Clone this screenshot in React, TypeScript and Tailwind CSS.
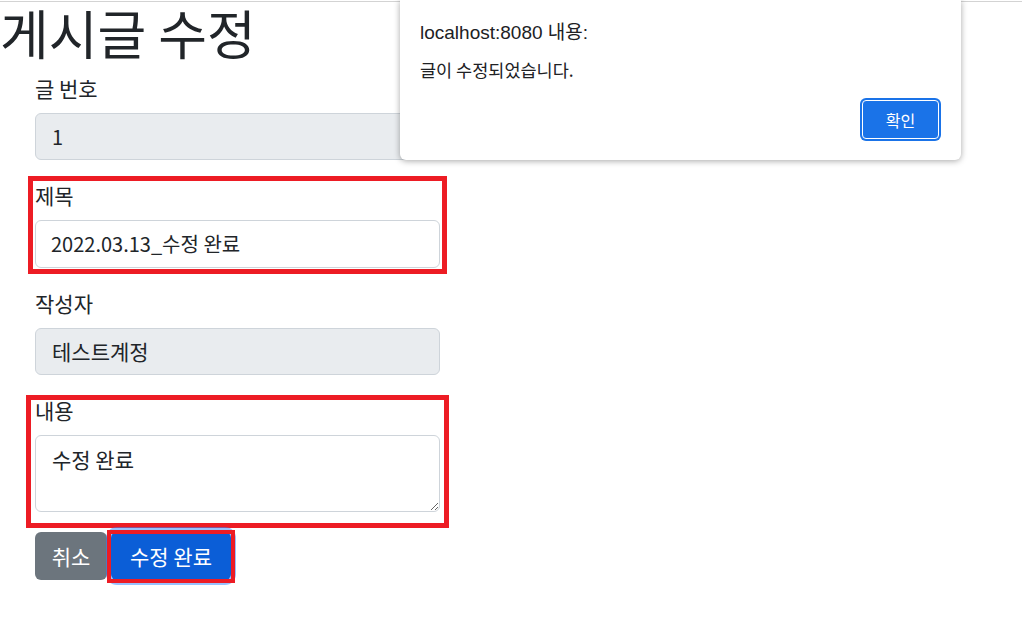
import React from "react";

const KR = '"Noto Sans CJK KR", "Liberation Sans", sans-serif';

function Label({ children }: { children: React.ReactNode }) {
  return <label className="block text-[21px] leading-[30px] mb-[10px] text-[#212529]">{children}</label>;
}

export default function App() {
  return (
    <div className="relative w-[1022px] h-[642px] bg-white overflow-hidden text-[#212529]" style={{ fontFamily: KR }}>
      <div className="mt-[1px] h-[1px] bg-[#d3d3d3]" />
      <h1 className="-mt-[5px] text-[53px] leading-[70px] font-normal mb-[5.5px] whitespace-nowrap text-[#212529]">게시글 수정</h1>

      <div className="pl-[35px] w-[440px]">
        <div className="mb-[20px]">
          <Label>글 번호</Label>
          <input
            readOnly
            value="1"
            className="block w-[405px] h-[47.5px] px-[16px] text-[20px] rounded-[6px] border border-[#ced4da] bg-[#e9ecef] text-[#212529] outline-none"
          />
        </div>

        <div className="relative mb-[20px]">
          <Label>제목</Label>
          <input
            readOnly
            value="2022.03.13_수정 완료"
            className="block w-[405px] h-[47.5px] px-[15px] text-[20px] rounded-[6px] border border-[#ced4da] bg-white text-[#212529] outline-none"
          />
          <div className="pointer-events-none absolute -left-[7px] -right-[7px] -top-[4px] -bottom-[6px] border-[5px] border-[#ed1c24]" />
        </div>

        <div className="mb-[20px]">
          <Label>작성자</Label>
          <input
            readOnly
            value="테스트계정"
            className="block w-[405px] h-[47.5px] px-[16px] text-[21px] rounded-[6px] border border-[#ced4da] bg-[#e9ecef] text-[#212529] outline-none"
          />
        </div>

        <div className="relative mb-[20px]">
          <Label>내용</Label>
          <textarea
            readOnly
            value="수정 완료"
            className="block w-[405px] h-[77px] px-[16px] py-[7.5px] text-[21px] leading-[30px] rounded-[6px] border border-[#ced4da] bg-white text-[#212529] outline-none resize-y"
          />
          <div className="pointer-events-none absolute -left-[9px] -right-[9px] top-0 -bottom-[15.5px] border-[5px] border-[#ed1c24]" />
        </div>

        <div className="flex items-start gap-[4px]">
          <button className="h-[48px] w-[72px] rounded-[6px] bg-[#6c757d] text-white text-[21px] leading-[30px]">취소</button>
          <div className="relative">
            <button className="h-[48px] w-[120px] rounded-[6px] bg-[#0b5ed7] text-white text-[21px] leading-[30px] shadow-[0_0_0_5px_rgba(49,132,253,0.5)]">
              수정 완료
            </button>
            <div className="pointer-events-none absolute -left-[4px] -right-[4px] -top-[2px] -bottom-[3px] border-[4px] border-[#ed1c24]" />
          </div>
        </div>
      </div>

      <div
        className="absolute left-[400px] top-0 w-[561px] h-[160px] bg-white rounded-b-[6px] shadow-[0_1px_6px_rgba(0,0,0,0.35)] px-[20px] pt-[19px] flex flex-col"
        style={{ fontFamily: '"Liberation Sans", "Noto Sans CJK KR", sans-serif' }}
      >
        <div className="text-[19px] leading-[27px] text-[#202124]">localhost:8080 내용:</div>
        <div className="mt-[12px] text-[17.5px] leading-[23px] text-[#202124]" style={{ fontFamily: KR }}>글이 수정되었습니다.</div>
        <div className="mt-[17px] flex justify-end">
          <div className="w-[81px] h-[43px] rounded-[6px] bg-[#1a73e8] p-[2px]">
            <div className="w-full h-full rounded-[4px] border border-white bg-[#1a73e8] flex items-center justify-center text-white text-[16px]" style={{ fontFamily: KR }}>
              확인
            </div>
          </div>
        </div>
      </div>
    </div>
  );
}
